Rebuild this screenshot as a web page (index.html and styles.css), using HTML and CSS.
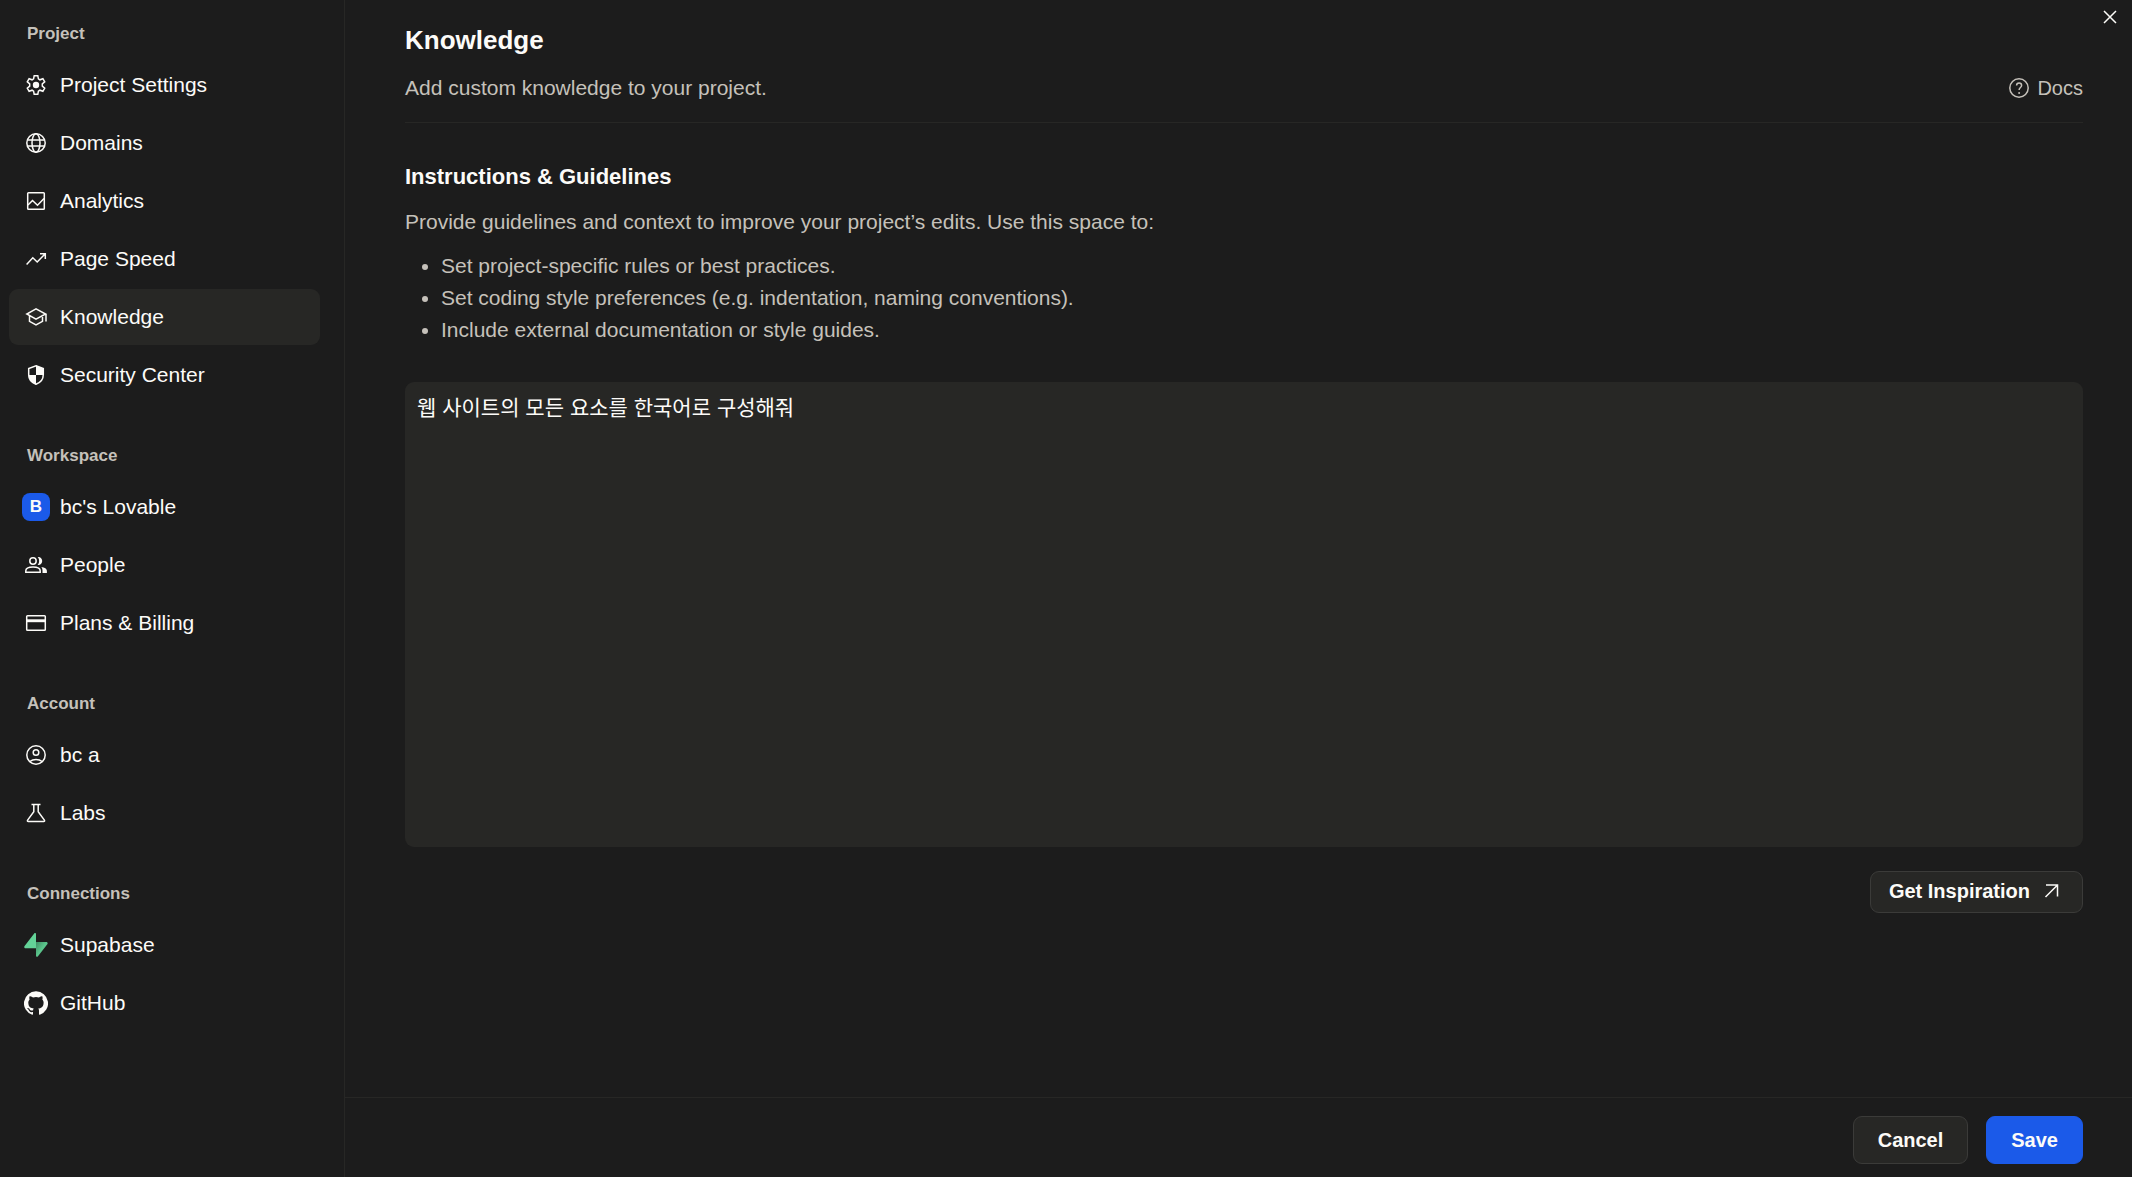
FILE: index.html
```html
<!DOCTYPE html>
<html lang="en">
<head>
<meta charset="utf-8">
<title>Knowledge</title>
<link rel="stylesheet" href="styles.css">
</head>
<body>
<div class="layout">
  <nav class="sidebar" aria-label="Settings">
    <section class="group">
      <h2 class="group-title">Project</h2>
      <ul class="group-list">
        <li><a class="item" href="#settings"><span class="item-icon"><svg class="icon" viewBox="0 0 24 24"><path d="M10.200 2.700h3.600l.6 3.200 1.500.9 3-1.100 1.800 3.100-2.400 2.100v2.200l2.400 2.100-1.800 3.100-3-1.100-1.500.9-.6 3.200h-3.600l-.6-3.200-1.500-.9-3 1.100-1.800-3.100 2.400-2.100v-2.200L3.300 8.800l1.800-3.100 3 1.100 1.500-.9z"/><circle class="solid" cx="12" cy="12" r="3.200"/></svg></span><span class="item-label">Project Settings</span></a></li>
        <li><a class="item" href="#domains"><span class="item-icon"><svg class="icon" viewBox="0 0 24 24"><circle cx="12" cy="12" r="9.200"/><ellipse cx="12" cy="12" rx="4" ry="9.200"/><path d="M3.500 9h17M3.500 15h17"/></svg></span><span class="item-label">Domains</span></a></li>
        <li><a class="item" href="#analytics"><span class="item-icon"><svg class="icon" viewBox="0 0 24 24"><rect x="3.700" y="3.700" width="16.600" height="16.600" rx=".8"/><path d="M4 16l4.500-4.500 5 4.700L20 9.500"/></svg></span><span class="item-label">Analytics</span></a></li>
        <li><a class="item" href="#speed"><span class="item-icon"><svg class="icon" viewBox="0 0 24 24"><path d="M2.600 17.400l6.200-6.600 4.400 4.200L21 7M16 6.800h5.300V12"/></svg></span><span class="item-label">Page Speed</span></a></li>
        <li><a class="item item-active" href="#knowledge" aria-current="page"><span class="item-icon"><svg class="icon" viewBox="0 0 24 24"><path d="M12 3.800L2.800 9 12 14.200l9.600-5.200zM5.500 10.800v5.500L12 20l6.500-3.700v-5.500M22 9v7.500"/></svg></span><span class="item-label">Knowledge</span></a></li>
        <li><a class="item" href="#security"><span class="item-icon"><svg class="icon" viewBox="0 0 24 24"><path d="M12 2.800l7.300 2.700v6c0 4.300-3 8.200-7.300 9.700-4.300-1.500-7.300-5.400-7.300-9.700v-6z"/><path class="solid" d="M12 2.500l7.500 3v6.500H12zM4.500 12H12v9.500C8 20 4.800 16.500 4.500 12z"/></svg></span><span class="item-label">Security Center</span></a></li>
      </ul>
    </section>
    <section class="group">
      <h2 class="group-title">Workspace</h2>
      <ul class="group-list">
        <li><a class="item" href="#workspace"><span class="item-icon"><span class="tile">B</span></span><span class="item-label">bc's Lovable</span></a></li>
        <li><a class="item" href="#people"><span class="item-icon"><svg class="icon" viewBox="0 0 24 24"><circle cx="9" cy="8" r="3.200"/><path d="M1.800 19.200v-1.500c0-2.300 3.200-3.800 7.200-3.800s7.200 1.500 7.200 3.800v1.500z"/><path class="solid" d="M13.600 11.900c1-1 1.500-2.300 1.500-3.900s-.5-2.900-1.500-3.900c2.700-.5 4.600 1.400 4.600 3.900s-1.900 4.400-4.600 3.900zM17.200 13.900c3.600.4 5.700 1.800 5.700 3.800V20h-4.400v-2.300c0-1.500-.3-2.700-1.300-3.800z"/></svg></span><span class="item-label">People</span></a></li>
        <li><a class="item" href="#billing"><span class="item-icon"><svg class="icon" viewBox="0 0 24 24"><rect x="2.700" y="4.700" width="18.600" height="14.600" rx=".8"/><path class="solid" d="M2.700 8.300h18.600v2.900H2.700z"/></svg></span><span class="item-label">Plans &amp; Billing</span></a></li>
      </ul>
    </section>
    <section class="group">
      <h2 class="group-title">Account</h2>
      <ul class="group-list">
        <li><a class="item" href="#account"><span class="item-icon"><svg class="icon" viewBox="0 0 24 24"><circle cx="12" cy="12" r="9.200"/><circle cx="12" cy="9.500" r="2.800"/><path d="M5.800 18.500c3.500-2.800 8.900-2.800 12.400 0"/></svg></span><span class="item-label">bc a</span></a></li>
        <li><a class="item" href="#labs"><span class="item-icon"><svg class="icon" viewBox="0 0 24 24"><path d="M7.500 3.600h9M9.800 3.600v7.200l-6.200 8.300c-.5.700-.1 1.300.7 1.300h15.400c.8 0 1.200-.6.700-1.300l-6.200-8.300V3.600"/></svg></span><span class="item-label">Labs</span></a></li>
      </ul>
    </section>
    <section class="group">
      <h2 class="group-title">Connections</h2>
      <ul class="group-list">
        <li><a class="item" href="#supabase"><span class="item-icon"><svg class="brand" viewBox="0 0 24 24"><defs><linearGradient id="bolt" x1="12" y1="9" x2="19" y2="14" gradientUnits="userSpaceOnUse"><stop offset="0" stop-color="#3f8c63"/><stop offset="1" stop-color="#5ac48b"/></linearGradient></defs><path fill="url(#bolt)" d="M12 9h10.300c1.200 0 1.800 1.300 1 2.200L13.800 23.400c-.6.800-1.800.3-1.800-.6z"/><path fill="#63d297" d="M12 .9v14.400H1.600c-1.200 0-1.800-1.300-1-2.200L10.200.5c.6-.8 1.800-.4 1.800.4z"/></svg></span><span class="item-label">Supabase</span></a></li>
        <li><a class="item" href="#github"><span class="item-icon"><svg class="brand" viewBox="0 0 24 24"><path fill="#fcfbf8" d="M12 .3a12 12 0 0 0-3.800 23.400c.6.100.8-.3.800-.6v-2c-3.300.7-4-1.600-4-1.600-.600-1.400-1.400-1.800-1.400-1.800-1-.7.1-.7.1-.7 1.200 0 1.900 1.200 1.900 1.200 1 1.800 2.800 1.300 3.500 1 0-.8.4-1.300.7-1.600-2.700-.3-5.500-1.300-5.500-6 0-1.200.5-2.300 1.300-3.100-.2-.4-.6-1.600 0-3.200 0 0 1-.3 3.400 1.200a11.500 11.500 0 0 1 6 0c2.300-1.500 3.300-1.200 3.300-1.200.6 1.600.2 2.800 0 3.200.9.800 1.300 1.900 1.300 3.200 0 4.600-2.800 5.600-5.500 5.900.5.400.9 1 .9 2.200v3.300c0 .3.100.7.800.6A12 12 0 0 0 12 .3"/></svg></span><span class="item-label">GitHub</span></a></li>
      </ul>
    </section>
  </nav>

  <div class="panel">
    <main class="content">
      <header class="head">
        <div class="head-text">
          <h1 class="title">Knowledge</h1>
          <p class="text">Add custom knowledge to your project.</p>
        </div>
        <a class="docs" href="#docs"><svg class="icon" viewBox="0 0 24 24"><circle cx="12" cy="12" r="9.200"/><path d="M9.600 9.600c0-1.500 1-2.500 2.500-2.500s2.500.9 2.500 2.300c0 2-2.500 2.200-2.500 4.600"/><circle class="solid" cx="12.100" cy="17" r="1"/></svg>Docs</a>
      </header>
      <h2 class="subtitle" id="guidelines">Instructions &amp; Guidelines</h2>
      <p class="text">Provide guidelines and context to improve your project’s edits. Use this space to:</p>
      <ul class="tips">
        <li>Set project-specific rules or best practices.</li>
        <li>Set coding style preferences (e.g. indentation, naming conventions).</li>
        <li>Include external documentation or style guides.</li>
      </ul>
      <textarea class="editor" lang="ko" aria-labelledby="guidelines">웹 사이트의 모든 요소를 한국어로 구성해줘</textarea>
      <button class="button button-small" type="button">Get Inspiration<svg class="icon" viewBox="0 0 24 24"><path d="M5.500 18L17.300 6.200M6 6h11.500v11.500"/></svg></button>
    </main>
    <footer class="footer">
      <button class="button" type="button">Cancel</button>
      <button class="button button-primary" type="submit">Save</button>
    </footer>
    <button class="close" type="button" aria-label="Close"><svg class="close-icon" viewBox="0 0 14 14"><path d="M1 1l12 12M13 1L1 13"/></svg></button>
  </div>
</div>
</body>
</html>
```
FILE: styles.css
```css
:root {
  --bg: #1c1c1c;
  --surface: #272725;
  --line: #272725;
  --edge: #3b3b39;
  --fg: #fcfbf8;
  --muted: #c5c1ba;
  --blue: #1b5ae9;
}

* {
  box-sizing: border-box;
}

body {
  margin: 0;
  background: var(--bg);
  color: var(--fg);
  font-family: "Liberation Sans", "Noto Sans CJK KR", sans-serif;
  font-size: 21px;
  line-height: 32px;
}

h1, h2, p, ul {
  margin: 0;
}

a {
  color: inherit;
  text-decoration: none;
}

.layout {
  display: flex;
  min-height: 100vh;
}

/* Sidebar */
.sidebar {
  display: flex;
  flex-direction: column;
  gap: 41px;
  flex: 0 0 345px;
  padding: 22px 24px 22px 9px;
  border-right: 1px solid var(--line);
}

.group-title {
  margin-bottom: 11px;
  padding-left: 18px;
  color: var(--muted);
  font-size: 17px;
  font-weight: 700;
  line-height: 24px;
}

.group-list {
  display: flex;
  flex-direction: column;
  gap: 2px;
  padding: 0;
  list-style: none;
}

.item {
  display: flex;
  align-items: center;
  gap: 10px;
  height: 56px;
  padding-left: 13px;
  border-radius: 9px;
}

.item-active {
  background: var(--surface);
}

.item-icon {
  display: grid;
  place-items: center;
  width: 28px;
  height: 28px;
}

.icon {
  width: 24px;
  height: 24px;
  fill: none;
  stroke: currentColor;
  stroke-width: 1.5;
}

.solid {
  fill: currentColor;
  stroke: none;
}

.brand {
  width: 24px;
  height: 24px;
}

.tile {
  width: 28px;
  border-radius: 8px;
  background: var(--blue);
  font-size: 17px;
  font-weight: 700;
  line-height: 28px;
  text-align: center;
}

/* Main panel */
.panel {
  position: relative;
  display: flex;
  flex: 1;
  flex-direction: column;
}

.content {
  display: flex;
  flex: 1;
  flex-direction: column;
  padding: 24px 49px 24px 60px;
}

.head {
  display: flex;
  align-items: flex-end;
  justify-content: space-between;
  padding-bottom: 18px;
  border-bottom: 1px solid var(--line);
}

.title {
  margin-bottom: 16px;
  font-size: 26px;
  font-weight: 700;
}

.text,
.tips {
  color: var(--muted);
}

.docs {
  display: flex;
  align-items: center;
  gap: 6px;
  color: var(--muted);
  font-size: 20px;
}

.subtitle {
  margin: 38px 0 13px;
  font-size: 22px;
  font-weight: 700;
}

.tips {
  margin: 12px 0 36px;
  padding-left: 36px;
}

.editor {
  height: 465px;
  padding: 8px 12px;
  border: 0;
  border-radius: 9px;
  outline: 0;
  background: var(--surface);
  color: var(--fg);
  font: inherit;
  font-family: "Noto Sans CJK KR", sans-serif;
  resize: none;
}

.button {
  height: 48px;
  padding: 0 24px;
  border: 1px solid var(--edge);
  border-radius: 9px;
  background: var(--surface);
  color: var(--fg);
  font: inherit;
  font-size: 20px;
  font-weight: 700;
}

.button-small {
  display: flex;
  align-items: center;
  align-self: flex-end;
  gap: 10px;
  height: 42px;
  margin-top: 24px;
  padding: 0 18px 2px;
}

.button-primary {
  border-color: var(--blue);
  background: var(--blue);
}

.footer {
  display: flex;
  justify-content: flex-end;
  gap: 18px;
  padding: 18px 49px 13px;
  border-top: 1px solid var(--line);
}

.close {
  position: absolute;
  top: 6px;
  right: 11px;
  display: grid;
  place-items: center;
  width: 22px;
  height: 22px;
  padding: 0;
  border: 0;
  background: none;
  color: var(--fg);
}

.close-icon {
  width: 14px;
  height: 14px;
  fill: none;
  stroke: currentColor;
  stroke-width: 1.5;
}
```
